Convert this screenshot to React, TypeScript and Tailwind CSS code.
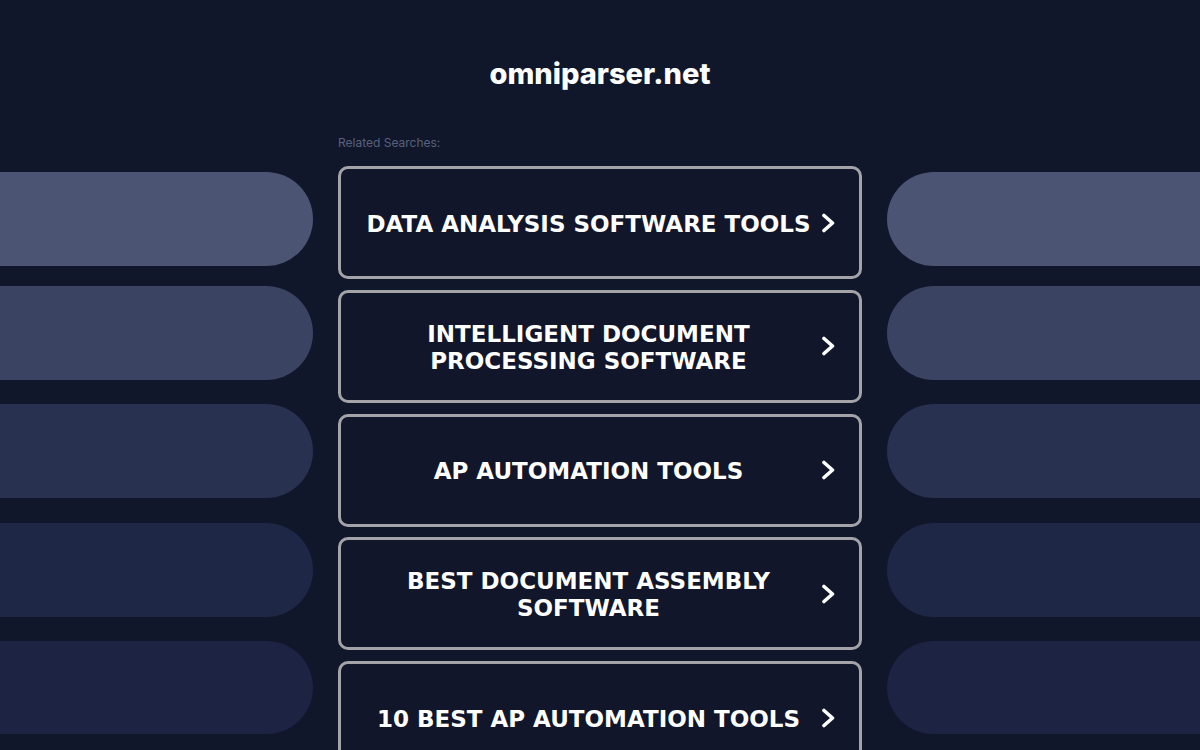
import React from "react";

const items = [
  "DATA ANALYSIS SOFTWARE TOOLS",
  "INTELLIGENT DOCUMENT PROCESSING SOFTWARE",
  "AP AUTOMATION TOOLS",
  "BEST DOCUMENT ASSEMBLY SOFTWARE",
  "10 BEST AP AUTOMATION TOOLS",
];

function Chevron() {
  return (
    <svg width="17" height="20" viewBox="0 0 17 20" className="shrink-0">
      <path d="M4 2.5 L12.5 10 L4 17.5" fill="none" stroke="#ffffff" strokeWidth="3.6" strokeLinecap="round" strokeLinejoin="round" />
    </svg>
  );
}

function Pills({ side }: { side: "left" | "right" }) {
  const r = side === "left" ? "rounded-r-full" : "rounded-l-full";
  return (
    <div className="flex flex-col pt-[172px]">
      <div className={`h-[94px] bg-[#4b5573] ${r}`} />
      <div className={`h-[94px] mt-[20px] bg-[#3a4362] ${r}`} />
      <div className={`h-[94px] mt-[24px] bg-[#283150] ${r}`} />
      <div className={`h-[94px] mt-[25px] bg-[#1f2746] ${r}`} />
      <div className={`h-[93px] mt-[24px] bg-[#1c2343] ${r}`} />
    </div>
  );
}

export default function App() {
  return (
    <div className="h-[750px] w-[1200px] overflow-hidden bg-[#11172b] flex">
      <div className="w-[313px] shrink-0">
        <Pills side="left" />
      </div>
      <div className="w-[524px] shrink-0 ml-[25px] mr-[25px] flex flex-col">
        <h1
          className="mt-[56px] text-center text-[29px] leading-[36px] font-extrabold text-white"
          style={{ fontFamily: "Inter, 'Open Sans', sans-serif" }}
        >
          omniparser.net
        </h1>
        <div
          className="mt-[43px] text-[12px] leading-[15px] text-[#58617c]"
          style={{ fontFamily: "Inter, 'Open Sans', sans-serif" }}
        >
          Related Searches:
        </div>
        <div className="mt-[16px] flex flex-col gap-[10.75px]">
          {items.map((t) => (
            <div
              key={t}
              className="h-[113px] shrink-0 rounded-[10px] border-[3px] border-[#a3a3a8] bg-[#11162a] flex items-center pl-[22px] pr-[22px]"
            >
              <div
                className="flex-1 pt-[3px] text-center text-white font-bold text-[23px] leading-[27px]"
                style={{ fontFamily: "'DejaVu Sans', Verdana, sans-serif" }}
              >
                {t}
              </div>
              <div className="ml-[6px]">
                <Chevron />
              </div>
            </div>
          ))}
        </div>
      </div>
      <div className="w-[313px] shrink-0">
        <Pills side="right" />
      </div>
    </div>
  );
}
